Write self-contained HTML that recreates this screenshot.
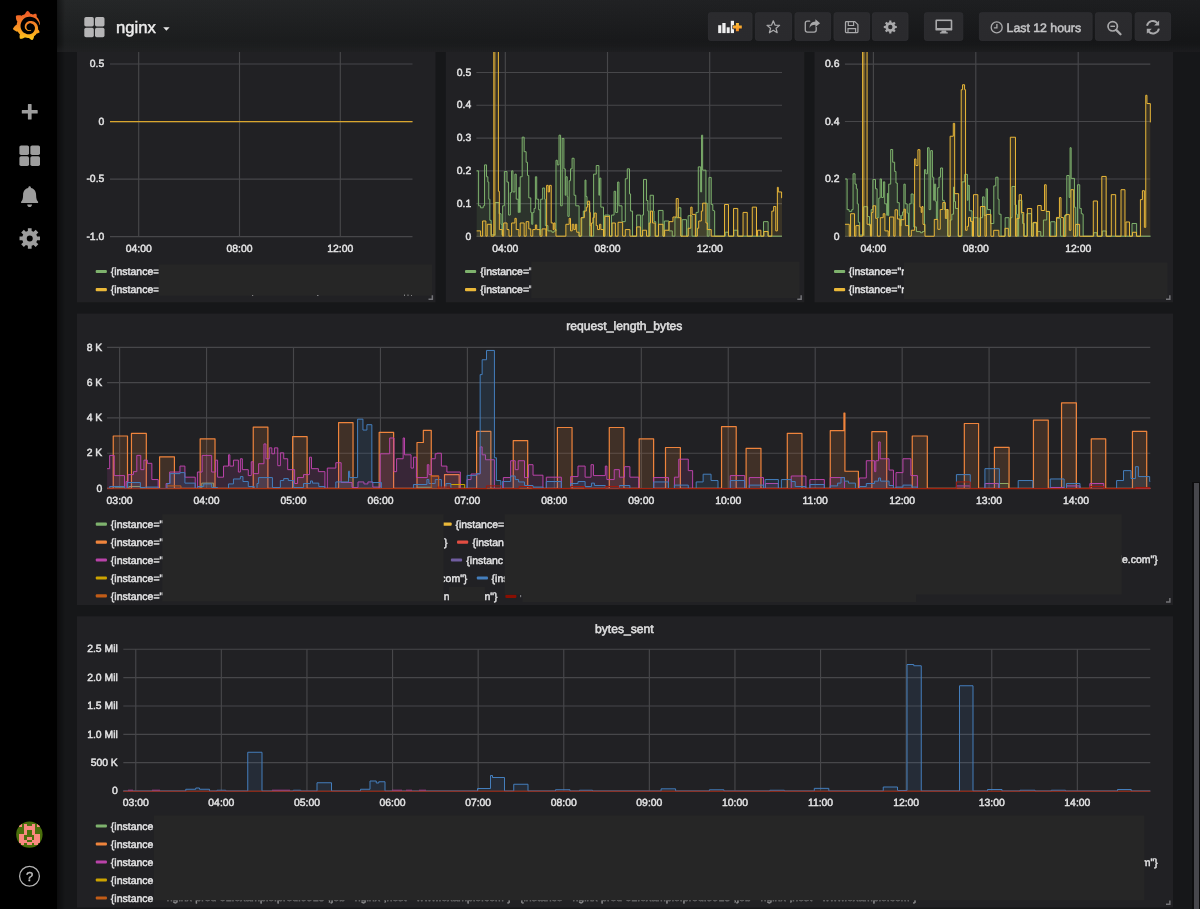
<!DOCTYPE html>
<html>
<head>
<meta charset="utf-8">
<title>nginx - Grafana</title>
<style>
*{box-sizing:border-box;margin:0;padding:0}
html,body{width:1200px;height:909px;overflow:hidden;background:#161719;font-family:"Liberation Sans",sans-serif;color:#d8d9da}
#side{will-change:transform;position:absolute;left:0;top:0;width:57px;height:909px;background:#000;z-index:5}
#sideshadow{position:absolute;left:57px;top:0;width:8px;height:909px;background:linear-gradient(90deg,rgba(0,0,0,.45),rgba(0,0,0,0));z-index:4}
#nav{will-change:transform;position:absolute;left:57px;top:0;width:1143px;height:52px;background:linear-gradient(180deg,rgba(255,255,255,.02) 0%,rgba(0,0,0,.14) 80%,rgba(0,0,0,.04) 100%),linear-gradient(90deg,#212324 0%,#1c1d1f 50%,#18191b 100%);z-index:3}
#navshadow{position:absolute;left:57px;top:45px;width:1143px;height:7px;background:linear-gradient(180deg,rgba(32,33,35,0),rgba(32,33,35,.55));z-index:4}
.panel{position:absolute;overflow:hidden;will-change:transform}
.panel svg{position:absolute;left:0;top:0}
.btn{position:absolute;top:13px;height:28px;background:linear-gradient(180deg,#2a2a2d,#2c2c2f);border:1px solid #313134;border-radius:2px}
.btn svg{position:absolute}
.ax{font-size:10.4px;fill:#e4e4e5;stroke:#e4e4e5;stroke-width:.45px;font-family:"Liberation Sans",sans-serif}
.lg{font-size:10.5px;fill:#e4e4e5;stroke:#e4e4e5;stroke-width:.45px;font-family:"Liberation Sans",sans-serif}
.ttl{font-size:12.15px;fill:#e0e0e1;stroke:#e0e0e1;stroke-width:.5px;font-family:"Liberation Sans",sans-serif}
.grid line{stroke:#47474a;stroke-width:1.15}
svg text{text-rendering:geometricPrecision}
.red{fill:#262626}
</style>
</head>
<body>
<div id="side"><svg width="57" height="909" viewBox="0 0 57 909" style="position:absolute;left:0;top:0"><defs><linearGradient id="lg" x1="0" y1="1" x2="0" y2="0"><stop offset="0" stop-color="#fdc81c"/><stop offset="0.22" stop-color="#fbab1e"/><stop offset="0.55" stop-color="#f58426"/><stop offset="1" stop-color="#ee5528"/></linearGradient></defs><g transform="translate(12.3 10.6) scale(0.08076)"><path fill="url(#lg)" d="M342,161.2c-0.6-6.1-1.6-13.1-3.6-20.9c-2-7.7-5-16.2-9.4-25c-4.4-8.8-10.1-17.9-17.5-26.8c-2.9-3.5-6.1-6.9-9.5-10.2c5.1-20.3-6.2-37.9-6.2-37.9c-19.5-1.2-31.9,6.1-36.5,9.4c-0.8-0.3-1.5-0.7-2.3-1c-3.3-1.3-6.7-2.6-10.3-3.7c-3.5-1.1-7.1-2.1-10.8-3c-3.7-0.9-7.4-1.6-11.2-2.2c-0.7-0.1-1.3-0.2-2-0.3c-8.5-27.2-32.9-38.6-32.9-38.6c-27.3,17.3-32.4,41.5-32.4,41.5s-0.1,0.5-0.3,1.4c-1.5,0.4-3,0.9-4.5,1.3c-2.1,0.6-4.2,1.4-6.2,2.2c-2.1,0.8-4.1,1.6-6.2,2.5c-4.1,1.8-8.2,3.8-12.2,6c-3.9,2.2-7.7,4.6-11.4,7.1c-0.5-0.2-1-0.4-1-0.4c-37.8-14.4-71.3,2.9-71.3,2.9c-3.1,40.2,15.1,65.5,18.7,70.1c-0.9,2.5-1.7,5-2.5,7.5c-2.8,9.1-4.9,18.4-6.2,28.1c-0.2,1.4-0.4,2.8-0.5,4.2c-35,17.3-45.3,52.6-45.3,52.6c29.1,33.5,63.1,35.6,63.1,35.6c0,0,0.1-0.1,0.1-0.1c4.3,7.7,9.3,15,14.9,21.9c2.4,2.9,4.8,5.6,7.4,8.3c-10.6,30.4,1.5,55.6,1.5,55.6c32.4,1.2,53.7-14.2,58.2-17.7c3.2,1.1,6.5,2.1,9.8,2.9c10,2.6,20.2,4.1,30.4,4.5c2.5,0.1,5.1,0.2,7.6,0.1l1.2,0l0.8,0l1.6,0l1.6-0.1l0,0.1c15.3,21.8,42.1,24.9,42.1,24.9c19.1-20.1,20.2-40.1,20.2-44.4l0,0c0,0,0-0.1,0-0.3c0-0.4,0-0.6,0-0.6l0,0c0-0.3,0-0.6,0-0.9c4-2.8,7.8-5.8,11.4-9.1c7.6-6.9,14.3-14.8,19.9-23.3c0.5-0.8,1-1.6,1.5-2.4c21.6,1.2,36.9-13.4,36.9-13.4c-3.6-22.5-16.4-33.5-19.1-35.6l0,0c0,0-0.1-0.1-0.3-0.2c-0.2-0.1-0.2-0.2-0.2-0.2c0,0,0,0,0,0c-0.1-0.1-0.3-0.2-0.5-0.3c0.1-1.4,0.2-2.7,0.3-4.1c0.2-2.4,0.2-4.9,0.2-7.3l0-1.8l0-0.9l0-0.5c0-0.6,0-0.4,0-0.6l-0.1-1.5l-0.1-2c0-0.7-0.1-1.3-0.2-1.9c-0.1-0.6-0.1-1.3-0.2-1.9l-0.2-1.9l-0.3-1.9c-0.4-2.5-0.8-4.9-1.4-7.4c-2.3-9.7-6.1-18.9-11-27.2c-5-8.3-11.2-15.6-18.3-21.8c-7-6.2-14.9-11.2-23.1-14.9c-8.3-3.7-16.9-6.1-25.5-7.2c-4.3-0.6-8.6-0.8-12.9-0.7l-1.6,0l-0.4,0c-0.1,0-0.6,0-0.5,0l-0.7,0l-1.6,0.1c-0.6,0-1.2,0.1-1.7,0.1c-2.2,0.2-4.4,0.5-6.5,0.9c-8.6,1.6-16.7,4.7-23.8,9c-7.1,4.3-13.3,9.6-18.3,15.6c-5,6-8.9,12.7-11.6,19.6c-2.7,6.9-4.2,14.1-4.6,21c-0.1,1.7-0.1,3.5-0.1,5.2c0,0.4,0,0.9,0,1.3l0.1,1.4c0.1,0.8,0.1,1.7,0.2,2.5c0.3,3.5,1,6.9,1.9,10.1c1.9,6.5,4.9,12.4,8.6,17.4c3.7,5,8.2,9.1,12.9,12.4c4.7,3.2,9.8,5.5,14.8,7c5,1.5,10,2.1,14.7,2.1c0.6,0,1.2,0,1.7,0c0.3,0,0.6,0,0.9,0c0.3,0,0.6,0,0.9-0.1c0.5,0,1-0.1,1.5-0.1c0.1,0,0.3,0,0.4-0.1l0.5-0.1c0.3,0,0.6-0.1,0.9-0.1c0.6-0.1,1.1-0.2,1.7-0.3c0.6-0.1,1.1-0.2,1.6-0.4c1.1-0.2,2.1-0.6,3.1-0.9c2-0.7,4-1.5,5.7-2.4c1.8-0.9,3.4-2,5-3c0.4-0.3,0.9-0.6,1.3-1c1.6-1.3,1.9-3.7,0.6-5.3c-1.1-1.4-3.1-1.8-4.7-0.9c-0.4,0.2-0.8,0.4-1.2,0.6c-1.4,0.7-2.8,1.3-4.3,1.8c-1.5,0.5-3.1,0.9-4.7,1.2c-0.8,0.1-1.6,0.2-2.5,0.3c-0.4,0-0.8,0.1-1.3,0.1c-0.4,0-0.9,0-1.2,0c-0.4,0-0.8,0-1.2,0c-0.5,0-1,0-1.5-0.1c0,0-0.3,0-0.1,0l-0.2,0l-0.3,0c-0.2,0-0.5,0-0.7-0.1c-0.5-0.1-0.9-0.1-1.4-0.2c-3.7-0.5-7.4-1.6-10.9-3.2c-3.6-1.6-7-3.8-10.1-6.6c-3.1-2.8-5.8-6.1-7.9-9.9c-2.1-3.8-3.6-8-4.3-12.4c-0.3-2.2-0.5-4.5-0.4-6.7c0-0.6,0.1-1.2,0.1-1.8c0,0.2,0-0.1,0-0.1l0-0.2l0-0.5c0-0.3,0.1-0.6,0.1-0.9c0.1-1.2,0.3-2.4,0.5-3.6c1.7-9.6,6.5-19,13.9-26.1c1.9-1.8,3.9-3.4,6-4.9c2.1-1.5,4.4-2.8,6.8-3.9c2.4-1.1,4.8-2,7.4-2.7c2.5-0.7,5.1-1.1,7.8-1.4c1.3-0.1,2.6-0.2,4-0.2c0.4,0,0.6,0,0.9,0l1.1,0l0.7,0c0.3,0,0,0,0.1,0l0.3,0l1.1,0.1c2.9,0.2,5.7,0.6,8.5,1.3c5.6,1.2,11.1,3.3,16.2,6.1c10.2,5.7,18.9,14.5,24.2,25.1c2.7,5.3,4.6,11,5.5,16.9c0.2,1.5,0.4,3,0.5,4.5l0.1,1.1l0.1,1.1c0,0.4,0,0.8,0,1.1c0,0.4,0,0.8,0,1.1l0,1l0,1.1c0,0.7-0.1,1.9-0.1,2.6c-0.1,1.6-0.3,3.3-0.5,4.9c-0.2,1.6-0.5,3.2-0.8,4.8c-0.3,1.6-0.7,3.2-1.1,4.7c-0.8,3.1-1.8,6.2-3,9.3c-2.4,6-5.6,11.8-9.4,17.1c-7.7,10.6-18.2,19.2-30.2,24.7c-6,2.7-12.3,4.7-18.8,5.7c-3.2,0.6-6.5,0.9-9.8,1l-0.6,0l-0.5,0l-1.1,0l-1.6,0l-0.8,0c0.4,0-0.1,0-0.1,0l-0.3,0c-1.8,0-3.5-0.1-5.3-0.3c-7-0.5-13.9-1.8-20.7-3.7c-6.7-1.9-13.2-4.6-19.4-7.8c-12.3-6.6-23.4-15.6-32-26.5c-4.3-5.4-8.1-11.3-11.2-17.4c-3.1-6.1-5.6-12.6-7.4-19.1c-1.8-6.6-2.9-13.3-3.4-20.1l-0.1-1.3l0-0.3l0-0.3l0-0.6l0-1.1l0-0.3l0-0.4l0-0.8l0-1.6l0-0.3c0,0,0,0.1,0-0.1l0-0.6c0-0.8,0-1.7,0-2.5c0.1-3.3,0.4-6.8,0.8-10.2c0.4-3.4,1-6.9,1.7-10.3c0.7-3.4,1.5-6.8,2.5-10.2c1.9-6.7,4.3-13.2,7.1-19.3c5.7-12.2,13.1-23.1,22-31.8c2.2-2.2,4.5-4.2,6.9-6.2c2.4-1.9,4.9-3.7,7.5-5.4c2.5-1.7,5.2-3.2,7.9-4.6c1.3-0.7,2.7-1.4,4.1-2c0.7-0.3,1.4-0.6,2.1-0.9c0.7-0.3,1.4-0.6,2.1-0.9c2.8-1.2,5.7-2.2,8.7-3.1c0.7-0.2,1.5-0.4,2.2-0.7c0.7-0.2,1.5-0.4,2.2-0.6c1.5-0.4,3-0.8,4.5-1.1c0.7-0.2,1.5-0.3,2.3-0.5c0.8-0.2,1.5-0.3,2.3-0.5c0.8-0.1,1.5-0.3,2.3-0.4l1.1-0.2l1.2-0.2c0.8-0.1,1.5-0.2,2.3-0.3c0.9-0.1,1.7-0.2,2.6-0.3c0.7-0.1,1.9-0.2,2.6-0.3c0.5-0.1,1.1-0.1,1.6-0.2l1.1-0.1l0.5-0.1l0.6,0c0.9-0.1,1.7-0.1,2.6-0.2l1.3-0.1c0,0,0.5,0,0.1,0l0.3,0l0.6,0c0.7,0,1.5-0.1,2.2-0.1c2.9-0.1,5.9-0.1,8.8,0c5.8,0.2,11.5,0.9,17,1.9c11.1,2.1,21.5,5.6,31,10.3c9.5,4.6,17.9,10.3,25.3,16.5c0.5,0.4,0.9,0.8,1.4,1.2c0.4,0.4,0.9,0.8,1.3,1.2c0.9,0.8,1.7,1.6,2.6,2.4c0.9,0.8,1.7,1.6,2.5,2.4c0.8,0.8,1.6,1.6,2.4,2.5c3.1,3.3,6,6.6,8.6,10c5.2,6.7,9.4,13.5,12.7,19.9c0.2,0.4,0.4,0.8,0.6,1.2c0.2,0.4,0.4,0.8,0.6,1.2c0.4,0.8,0.8,1.6,1.1,2.4c0.4,0.8,0.7,1.5,1.1,2.3c0.3,0.8,0.7,1.5,1,2.3c1.2,3,2.4,5.9,3.3,8.6c1.5,4.4,2.6,8.3,3.5,11.7c0.3,1.4,1.6,2.3,3,2.1c1.5-0.1,2.6-1.3,2.6-2.8C342.6,170.4,342.5,166.1,342,161.2z"/></g><path fill="#9d9d9d" d="M28.4 103.9h2.7a.5.5 0 0 1 .5.5v5.6h5.600a.5.5 0 0 1 .5.5v2.500a.5.5 0 0 1-.5.5h-5.600v5.600a.5.5 0 0 1-.5.5h-2.700a.5.5 0 0 1-.5-.5v-5.600h-5.600a.5.5 0 0 1-.5-.5v-2.500a.5.5 0 0 1 .5-.5h5.600v-5.600a.5.5 0 0 1 .5-.5z"/><rect x="19.4" y="145.4" width="9.65" height="9.65" rx="1.7" fill="#9d9d9d"/><rect x="19.4" y="156.35" width="9.65" height="9.65" rx="1.7" fill="#9d9d9d"/><rect x="30.35" y="145.4" width="9.65" height="9.65" rx="1.7" fill="#9d9d9d"/><rect x="30.35" y="156.35" width="9.65" height="9.65" rx="1.7" fill="#9d9d9d"/><path fill="#9d9d9d" d="M29.6 186.2c.8 0 1.3.6 1.3 1.3v.6c3.2.7 5.2 3.3 5.2 6.9 0 3.900 .9 5.7 2 6.700v1.4h-17v-1.4c1.100-1 2-2.800 2-6.700 0-3.600 2-6.200 5.200-6.900v-.6c0-.7.5-1.300 1.300-1.300z"/><path fill="#9d9d9d" d="M27.2 204.4h4.800c0 1.500-1 2.600-2.400 2.600s-2.400-1.100-2.400-2.600z"/><path fill="#9d9d9d" fill-rule="evenodd" d="M37.11 236.51 L39.98 236.53 L39.98 240.27 L37.11 240.29 L36.29 242.27 L38.31 244.31 L35.66 246.96 L33.62 244.94 L31.64 245.76 L31.62 248.63 L27.88 248.63 L27.86 245.76 L25.88 244.94 L23.84 246.96 L21.19 244.31 L23.21 242.27 L22.39 240.29 L19.52 240.27 L19.52 236.53 L22.39 236.51 L23.21 234.53 L21.19 232.49 L23.84 229.84 L25.88 231.86 L27.86 231.04 L27.88 228.17 L31.62 228.17 L31.64 231.04 L33.62 231.86 L35.66 229.84 L38.31 232.49 L36.29 234.53ZM26.75 238.4 a3 3 0 1 0 6 0 a3 3 0 1 0 -6 0Z"/><defs><clipPath id="av"><circle cx="29.4" cy="834.6" r="13.2"/></clipPath></defs><g clip-path="url(#av)" shape-rendering="crispEdges"><rect x="16.2" y="821.4" width="26.4" height="26.4" fill="#4a6f0c"/><rect x="18.64" y="823.84" width="3.04" height="3.04" fill="#f98a80"/><rect x="23.92" y="823.84" width="3.04" height="3.04" fill="#f98a80"/><rect x="31.84" y="823.84" width="3.04" height="3.04" fill="#f98a80"/><rect x="37.12" y="823.84" width="3.04" height="3.04" fill="#f98a80"/><rect x="23.92" y="826.48" width="3.04" height="3.04" fill="#f98a80"/><rect x="26.56" y="826.48" width="3.04" height="3.04" fill="#f98a80"/><rect x="29.2" y="826.48" width="3.04" height="3.04" fill="#f98a80"/><rect x="31.84" y="826.48" width="3.04" height="3.04" fill="#f98a80"/><rect x="23.92" y="829.12" width="3.04" height="3.04" fill="#f98a80"/><rect x="31.84" y="829.12" width="3.04" height="3.04" fill="#f98a80"/><rect x="23.92" y="831.76" width="3.04" height="3.04" fill="#f98a80"/><rect x="31.84" y="831.76" width="3.04" height="3.04" fill="#f98a80"/><rect x="18.64" y="834.4" width="3.04" height="3.04" fill="#f98a80"/><rect x="21.28" y="834.4" width="3.04" height="3.04" fill="#f98a80"/><rect x="34.48" y="834.4" width="3.04" height="3.04" fill="#f98a80"/><rect x="37.12" y="834.4" width="3.04" height="3.04" fill="#f98a80"/><rect x="18.64" y="837.04" width="3.04" height="3.04" fill="#f98a80"/><rect x="21.28" y="837.04" width="3.04" height="3.04" fill="#f98a80"/><rect x="26.56" y="837.04" width="3.04" height="3.04" fill="#f98a80"/><rect x="29.2" y="837.04" width="3.04" height="3.04" fill="#f98a80"/><rect x="34.48" y="837.04" width="3.04" height="3.04" fill="#f98a80"/><rect x="37.12" y="837.04" width="3.04" height="3.04" fill="#f98a80"/><rect x="18.64" y="839.68" width="3.04" height="3.04" fill="#f98a80"/><rect x="21.28" y="839.68" width="3.04" height="3.04" fill="#f98a80"/><rect x="23.92" y="839.68" width="3.04" height="3.04" fill="#f98a80"/><rect x="31.84" y="839.68" width="3.04" height="3.04" fill="#f98a80"/><rect x="34.48" y="839.68" width="3.04" height="3.04" fill="#f98a80"/><rect x="37.12" y="839.68" width="3.04" height="3.04" fill="#f98a80"/><rect x="21.28" y="842.32" width="3.04" height="3.04" fill="#f98a80"/><rect x="26.56" y="842.32" width="3.04" height="3.04" fill="#f98a80"/><rect x="29.2" y="842.32" width="3.04" height="3.04" fill="#f98a80"/><rect x="34.48" y="842.32" width="3.04" height="3.04" fill="#f98a80"/></g><circle cx="29.5" cy="876.2" r="9.9" fill="none" stroke="#b4b4b4" stroke-width="1.25"/><text x="29.6" y="880.9" text-anchor="middle" font-size="13" font-family="Liberation Sans, sans-serif" fill="#c0c0c0" stroke="#c0c0c0" stroke-width="0.4">?</text></svg></div>
<div id="sideshadow"></div>
<div id="nav"><svg width="1143" height="52" viewBox="57 0 1143 52" style="position:absolute;left:0;top:0"><defs><linearGradient id="bg" x1="0" y1="0" x2="0" y2="1"><stop offset="0" stop-color="#2b2b2e"/><stop offset="1" stop-color="#2a2a2d"/></linearGradient></defs><rect x="708.4" y="12.7" width="43.6" height="27.7" rx="2.2" fill="url(#bg)" stroke="#303033" stroke-width="0.8"/><rect x="755.4" y="12.7" width="36.2" height="27.7" rx="2.2" fill="url(#bg)" stroke="#303033" stroke-width="0.8"/><rect x="795" y="12.7" width="35.6" height="27.7" rx="2.2" fill="url(#bg)" stroke="#303033" stroke-width="0.8"/><rect x="834" y="12.7" width="35.6" height="27.7" rx="2.2" fill="url(#bg)" stroke="#303033" stroke-width="0.8"/><rect x="872.4" y="12.7" width="35.6" height="27.7" rx="2.2" fill="url(#bg)" stroke="#303033" stroke-width="0.8"/><rect x="924.4" y="12.7" width="38.4" height="27.7" rx="2.2" fill="url(#bg)" stroke="#303033" stroke-width="0.8"/><rect x="979.4" y="12.7" width="112.7" height="27.7" rx="2.2" fill="url(#bg)" stroke="#303033" stroke-width="0.8"/><rect x="1095.4" y="12.7" width="36" height="27.7" rx="2.2" fill="url(#bg)" stroke="#303033" stroke-width="0.8"/><rect x="1135.1" y="12.7" width="35.5" height="27.7" rx="2.2" fill="url(#bg)" stroke="#303033" stroke-width="0.8"/><rect x="84.3" y="17" width="9.5" height="9.5" rx="1.7" fill="#b5b5b6"/><rect x="84.3" y="27.7" width="9.5" height="9.5" rx="1.7" fill="#b5b5b6"/><rect x="95" y="17" width="9.5" height="9.5" rx="1.7" fill="#b5b5b6"/><rect x="95" y="27.7" width="9.5" height="9.5" rx="1.7" fill="#b5b5b6"/><text x="116" y="33" font-size="16.7" font-family="Liberation Sans, sans-serif" fill="#ececec" stroke="#ececec" stroke-width="0.45">nginx</text><path d="M163.2 27.2h6.400l-3.200 3.600z" fill="#e8e8e8"/><rect x="718.2" y="25.2" width="3.1" height="7.9" fill="#efefef"/><rect x="722.3" y="23" width="3.3" height="10.1" fill="#efefef"/><rect x="726.7" y="27.3" width="3" height="5.8" fill="#efefef"/><rect x="730.8" y="20.8" width="3.2" height="12.3" fill="#efefef"/><defs><linearGradient id="pg" x1="0" y1="0" x2="0" y2="1"><stop offset="0" stop-color="#fdc23a"/><stop offset="1" stop-color="#f58a1f"/></linearGradient></defs><path d="M735.900 23h3v2.600h2.900v3h-2.900v2.600h-3v-2.600h-2.900v-3h2.900z" fill="url(#pg)" stroke="#29292c" stroke-width="1.300" paint-order="stroke" stroke-linejoin="round"/><path d="M773.3 20.8 L775 25.05 L779.58 25.36 L776.06 28.3 L777.18 32.74 L773.3 30.3 L769.42 32.74 L770.54 28.3 L767.02 25.36 L771.6 25.05Z" fill="none" stroke="#a9a9ab" stroke-width="1.25" stroke-linejoin="round"/><path d="M816.200 27.500v2.500a2.100 2.100 0 0 1-2.100 2.100h-6.700a2.100 2.100 0 0 1-2.100-2.100v-6.700a2.100 2.100 0 0 1 2.100-2.100h2.300" fill="none" stroke="#a9a9ab" stroke-width="1.3" stroke-linecap="round"/><path d="M815.400 19.300l4.700 3.900-4.700 3.900v-2.400c-3.200 0-4.800 1-5.800 3.300 0-4 2.200-6.200 5.800-6.400z" fill="#a9a9ab"/><path d="M846.300 21.600h8.600l3 3v7.200a.8.800 0 0 1-.8.800h-10.800a.8.800 0 0 1-.8-.8v-9.400a.8.800 0 0 1 .8-.8z" fill="none" stroke="#a9a9ab" stroke-width="1.25" stroke-linejoin="round"/><path d="M848.300 21.800v3.700h5.300v-3.700M848 32.400v-3.800h7.600v3.800" fill="none" stroke="#a9a9ab" stroke-width="1.15"/><path fill="#a9a9ab" fill-rule="evenodd" d="M895.06 25.86 L896.81 25.92 L896.81 28.08 L895.06 28.14 L894.48 29.56 L895.67 30.84 L894.14 32.37 L892.86 31.18 L891.44 31.76 L891.38 33.51 L889.22 33.51 L889.16 31.76 L887.74 31.18 L886.46 32.37 L884.93 30.84 L886.12 29.56 L885.54 28.14 L883.79 28.08 L883.79 25.92 L885.54 25.86 L886.12 24.44 L884.93 23.16 L886.46 21.63 L887.74 22.82 L889.16 22.24 L889.22 20.49 L891.38 20.49 L891.44 22.24 L892.86 22.82 L894.14 21.63 L895.67 23.16 L894.48 24.44ZM888.1 27 a2.2 2.2 0 1 0 4.4 0 a2.2 2.2 0 1 0 -4.4 0Z"/><rect x="935.400" y="19.600" width="16.900" height="11" rx="1.200" fill="#a9a9ab"/><rect x="937" y="21.100" width="13.700" height="6.900" fill="#29292c"/><path d="M941.700 30.600h4.300l.5 1.700h1.300v1.200h-7.900v-1.200h1.300z" fill="#a9a9ab"/><circle cx="996.700" cy="27.400" r="5.500" fill="none" stroke="#a9a9ab" stroke-width="1.300"/><path d="M996.900 23.900v3.900h-3" fill="none" stroke="#a9a9ab" stroke-width="1.300"/><text x="1006.600" y="32.200" font-size="12.300" font-family="Liberation Sans, sans-serif" fill="#c4c4c6" stroke="#c4c4c6" stroke-width="0.5">Last 12 hours</text><circle cx="1112.700" cy="26.300" r="4.700" fill="none" stroke="#a9a9ab" stroke-width="1.700"/><path d="M1116.200 29.900l4.300 4.300" stroke="#a9a9ab" stroke-width="2.300" stroke-linecap="round"/><path d="M1110.400 26.300h4.600" stroke="#a9a9ab" stroke-width="1.400"/><path d="M1147 25.800a6 6 0 0 1 10.300-2.900" fill="none" stroke="#a9a9ab" stroke-width="1.900"/><path d="M1159.100 20.600v5h-5z" fill="#a9a9ab"/><path d="M1158.900 28.600a6 6 0 0 1-10.300 2.900" fill="none" stroke="#a9a9ab" stroke-width="1.900"/><path d="M1146.800 33.800v-5h5z" fill="#a9a9ab"/></svg></div>
<div id="navshadow"></div>
<div class="panel" style="left:77px;top:10px;width:359px;height:293px"><svg width="359" height="293" viewBox="77 10 359 293"><rect x="77" y="10.8" width="358.5" height="291.5" fill="#212124"/><g class="grid"><line x1="110" x2="412.5" y1="64" y2="64"/><line x1="110" x2="412.5" y1="121.6" y2="121.6"/><line x1="110" x2="412.5" y1="179.1" y2="179.1"/><line x1="110" x2="412.5" y1="236.6" y2="236.6"/><line x1="138.7" x2="138.7" y1="52" y2="236.6"/><line x1="239.5" x2="239.5" y1="52" y2="236.6"/><line x1="340.3" x2="340.3" y1="52" y2="236.6"/></g><text class="ax" x="104.3" y="67.2" text-anchor="end">0.5</text><text class="ax" x="104.3" y="124.8" text-anchor="end">0</text><text class="ax" x="104.3" y="182.3" text-anchor="end">-0.5</text><text class="ax" x="104.3" y="239.8" text-anchor="end">-1.0</text><text class="ax" x="138.7" y="251.8" text-anchor="middle">04:00</text><text class="ax" x="239.5" y="251.8" text-anchor="middle">08:00</text><text class="ax" x="340.3" y="251.8" text-anchor="middle">12:00</text><line x1="110" x2="412.5" y1="121.6" y2="121.6" stroke="#d9a62e" stroke-width="1.2"/><rect x="95.7" y="269.9" width="11.2" height="3.2" rx="1" fill="#7EB26D"/><text class="lg" x="110.7" y="275.3">{instance=</text><rect x="95.7" y="288" width="11.2" height="3.2" rx="1" fill="#EAB839"/><text class="lg" x="110.7" y="293.4">{instance=</text><rect class="red" x="158.6" y="264.3" width="273.4" height="31.3"/><g fill="#9a9a9c"><rect x="252" y="295" width="1.2" height="0.8"/><rect x="317" y="295" width="1.5" height="0.8"/><rect x="404" y="294.6" width="1" height="1.2"/><rect x="407.5" y="294.6" width="1" height="1.2"/><rect x="411" y="295" width="1" height="0.8"/></g><path d="M433.1 299.9 h-4.6 v-1.5 h3.1 v-3.1 h1.5z" fill="#737377"/></svg></div>
<div class="panel" style="left:445px;top:10px;width:360px;height:293px"><svg width="360" height="293" viewBox="445 10 360 293"><rect x="445.8" y="10.8" width="358.5" height="291.5" fill="#212124"/><defs><clipPath id="c2"><rect x="476" y="52" width="307" height="185.2"/></clipPath><clipPath id="c3"><rect x="844.5" y="52" width="306.5" height="185.2"/></clipPath></defs><g class="grid"><line x1="476.4" x2="782" y1="236.4" y2="236.4"/><line x1="476.4" x2="782" y1="203.62" y2="203.62"/><line x1="476.4" x2="782" y1="170.84" y2="170.84"/><line x1="476.4" x2="782" y1="138.06" y2="138.06"/><line x1="476.4" x2="782" y1="105.28" y2="105.28"/><line x1="476.4" x2="782" y1="72.5" y2="72.5"/><line x1="505.3" x2="505.3" y1="52" y2="236.4"/><line x1="607.5" x2="607.5" y1="52" y2="236.4"/><line x1="709.7" x2="709.7" y1="52" y2="236.4"/></g><text class="ax" x="471.3" y="239.6" text-anchor="end">0</text><text class="ax" x="471.3" y="206.82" text-anchor="end">0.1</text><text class="ax" x="471.3" y="174.04" text-anchor="end">0.2</text><text class="ax" x="471.3" y="141.26" text-anchor="end">0.3</text><text class="ax" x="471.3" y="108.48" text-anchor="end">0.4</text><text class="ax" x="471.3" y="75.7" text-anchor="end">0.5</text><text class="ax" x="505.3" y="251.8" text-anchor="middle">04:00</text><text class="ax" x="607.5" y="251.8" text-anchor="middle">08:00</text><text class="ax" x="709.7" y="251.8" text-anchor="middle">12:00</text><path d="M476.64 170.83H478.62V205.81H480.6V207.79H483.24V205.81H484.56V164.88H486.54V176.77H487.86V182.05H488.79V199.21H489.84V220.33H491.16V234.85H495.12V202.51H499.08V213.73H501.06V224.29H501.99V234.85H502.65V205.81H504.36V171.49H507V182.05H508.59V215.05H510.3V192.61H511.62V170.83H512.94V191.95H514.92V174.13H516.24V199.21H518.22V212.41H518.88V187.33H519.54V212.41H520.2V176.77H522.18V137.16H524.17V151.68H526.15V162.24H527.47V175.45H528.79V197.89H530.77V212.41H531.69V224.29H532.75V212.41H534.07V208.45H535.39V176.77H536.71V199.21H538.69V209.77H540.01V234.85H540.67V199.21H542.65V187.99H544.63V199.21H545.29V225.61H547.93V230.89H551.89V232.21H554V230.89H555.98V160.26H557.3V164.88H559.02V135.18H560.6V205.81H562.18V138.48H563.9V168.84H565.22V195.25H565.88V176.77H567.2V196.57H567.86V216.37H569.18V180.73H570.5V168.84H572.09V158.28H574.07V195.25H575.78V205.81H579.08V236.17H581.72V217.69H583.31V211.09H585.02V180.07H585.95V196.57H587V204.49H589.64V236.17H593.6V174.13H596.24V165.54H598.88V195.25H599.54V178.09H600.86V207.13H603.5V236.17H604.83V215.05H609.45V236.17H611.43V215.05H614.07V191.29H615.65V212.41H617.63V182.05H618.95V205.81H621.99V221.65H625.29V178.75H627.27V168.84H629.51V193.93H630.57V211.09H632.55V236.17H634V236.17H636.64V215.05H640.6V236.17H642.18V215.05H643.5V179.41H646.54V200.53H647.86V211.09H648.79V236.17H650.11V195.25H653.41V211.09H654.07V221.65H655.78V236.17H658.42V210.43H663.04V236.17H664.36V220.99H668.98V230.89H672.28V236.17H674.92V217.69H678.22V207.79H680.86V236.17H682.18V219.67H686.54V236.17H688.13V215.71H692.09V236.17H696.05V212.41H698.29V166.86H700.67V191.95H701.59V135.18H702.65V170.17H705.95V203.17H707.27V236.17H708.98V177.43H711.23V204.49H712.81V210.43H714V211.09H714.66V236.17H725.22V232.21H728.52V236.17H733.8V230.23H737.76V236.17H763.5V221.65H768.13V236.17H781.99V236.17H782V236.4 H476.64 Z" fill="#7EB26D" fill-opacity="0.12" stroke="none" clip-path="url(#c2)"/><path d="M476.64 170.83H478.62V205.81H480.6V207.79H483.24V205.81H484.56V164.88H486.54V176.77H487.86V182.05H488.79V199.21H489.84V220.33H491.16V234.85H495.12V202.51H499.08V213.73H501.06V224.29H501.99V234.85H502.65V205.81H504.36V171.49H507V182.05H508.59V215.05H510.3V192.61H511.62V170.83H512.94V191.95H514.92V174.13H516.24V199.21H518.22V212.41H518.88V187.33H519.54V212.41H520.2V176.77H522.18V137.16H524.17V151.68H526.15V162.24H527.47V175.45H528.79V197.89H530.77V212.41H531.69V224.29H532.75V212.41H534.07V208.45H535.39V176.77H536.71V199.21H538.69V209.77H540.01V234.85H540.67V199.21H542.65V187.99H544.63V199.21H545.29V225.61H547.93V230.89H551.89V232.21H554V230.89H555.98V160.26H557.3V164.88H559.02V135.18H560.6V205.81H562.18V138.48H563.9V168.84H565.22V195.25H565.88V176.77H567.2V196.57H567.86V216.37H569.18V180.73H570.5V168.84H572.09V158.28H574.07V195.25H575.78V205.81H579.08V236.17H581.72V217.69H583.31V211.09H585.02V180.07H585.95V196.57H587V204.49H589.64V236.17H593.6V174.13H596.24V165.54H598.88V195.25H599.54V178.09H600.86V207.13H603.5V236.17H604.83V215.05H609.45V236.17H611.43V215.05H614.07V191.29H615.65V212.41H617.63V182.05H618.95V205.81H621.99V221.65H625.29V178.75H627.27V168.84H629.51V193.93H630.57V211.09H632.55V236.17H634V236.17H636.64V215.05H640.6V236.17H642.18V215.05H643.5V179.41H646.54V200.53H647.86V211.09H648.79V236.17H650.11V195.25H653.41V211.09H654.07V221.65H655.78V236.17H658.42V210.43H663.04V236.17H664.36V220.99H668.98V230.89H672.28V236.17H674.92V217.69H678.22V207.79H680.86V236.17H682.18V219.67H686.54V236.17H688.13V215.71H692.09V236.17H696.05V212.41H698.29V166.86H700.67V191.95H701.59V135.18H702.65V170.17H705.95V203.17H707.27V236.17H708.98V177.43H711.23V204.49H712.81V210.43H714V211.09H714.66V236.17H725.22V232.21H728.52V236.17H733.8V230.23H737.76V236.17H763.5V221.65H768.13V236.17H781.99V236.17H782" fill="none" stroke="#7EB26D" stroke-width="1" stroke-linejoin="round" clip-path="url(#c2)"/><path d="M476.64 230.89H480.6V236.17H482.58V220.99H485.88V236.17H487.2V224.29H491.16V236.17H493.8V-144.03H498.42V191.29H499.35V229.57H502.38V236.17H503.7V222.97H507V229.57H508.98V236.17H511.62V222.97H514.92V218.35H516.24V229.57H518.88V236.17H520.2V222.97H524.17V236.17H526.15V221.65H528.79V228.91H530.77V236.17H532.75V229.57H535.39V224.95H536.71V229.57H540.01V236.17H541.99V228.91H545.95V236.17H546.61V185.35H548.19V191.95H549.51V185.35H551.23V222.97H553.21V229.57H554V222.97H555.06V229.57H555.98V236.17H565.88V224.29H569.18V218.35H570.5V230.89H572.22V224.29H573.8V229.57H575.39V224.29H576.71V232.21H579.08V236.17H581.06V217.69H584.36V211.09H586.34V207.13H587.66V201.19H589.64V212.41H590.3V225.61H590.96V236.17H591.62V222.97H592.94V217.69H594.26V213.07H596.24V225.61H597.56V229.57H599.54V224.29H600.86V229.57H603.5V236.17H604.83V216.37H609.45V236.17H612.09V222.97H615.39V236.17H618.03V222.31H622.65V236.17H625.29V229.57H629.91V236.17H634V236.17H636.64V226.93H640.34V236.17H642.58V230.23H646.54V236.17H649.18V222.97H650.5V211.09H652.48V222.97H655.12V236.17H658.42V224.29H663.04V236.17H664.63V230.23H668.98V221.65H672.94V217.03H676.24V198.55H678.22V217.69H680.86V236.17H688.13V228.25H690.77V207.13H692.09V214.39H695.39V236.17H697.37V228.25H698.69V220.99H701.33V211.09H702.65V203.17H705.95V222.97H707.27V229.57H711.23V236.17H714V236.17H724.56V204.49H728.52V236.17H733.54V208.45H737.76V236.17H743.04V212.41H747.27V236.17H752.28V207.13H756.51V236.17H757.56V230.23H760.86V236.17H763.9V231.55H768.13V236.17H771.82V211.09H773.67V206.47H775.78V230.89H777.37V187.33H778.29V191.95H781.59V197.89H781.99V197.89H782V236.4 H476.64 Z" fill="#EAB839" fill-opacity="0.12" stroke="none" clip-path="url(#c2)"/><path d="M476.64 230.89H480.6V236.17H482.58V220.99H485.88V236.17H487.2V224.29H491.16V236.17H493.8V-144.03H498.42V191.29H499.35V229.57H502.38V236.17H503.7V222.97H507V229.57H508.98V236.17H511.62V222.97H514.92V218.35H516.24V229.57H518.88V236.17H520.2V222.97H524.17V236.17H526.15V221.65H528.79V228.91H530.77V236.17H532.75V229.57H535.39V224.95H536.71V229.57H540.01V236.17H541.99V228.91H545.95V236.17H546.61V185.35H548.19V191.95H549.51V185.35H551.23V222.97H553.21V229.57H554V222.97H555.06V229.57H555.98V236.17H565.88V224.29H569.18V218.35H570.5V230.89H572.22V224.29H573.8V229.57H575.39V224.29H576.71V232.21H579.08V236.17H581.06V217.69H584.36V211.09H586.34V207.13H587.66V201.19H589.64V212.41H590.3V225.61H590.96V236.17H591.62V222.97H592.94V217.69H594.26V213.07H596.24V225.61H597.56V229.57H599.54V224.29H600.86V229.57H603.5V236.17H604.83V216.37H609.45V236.17H612.09V222.97H615.39V236.17H618.03V222.31H622.65V236.17H625.29V229.57H629.91V236.17H634V236.17H636.64V226.93H640.34V236.17H642.58V230.23H646.54V236.17H649.18V222.97H650.5V211.09H652.48V222.97H655.12V236.17H658.42V224.29H663.04V236.17H664.63V230.23H668.98V221.65H672.94V217.03H676.24V198.55H678.22V217.69H680.86V236.17H688.13V228.25H690.77V207.13H692.09V214.39H695.39V236.17H697.37V228.25H698.69V220.99H701.33V211.09H702.65V203.17H705.95V222.97H707.27V229.57H711.23V236.17H714V236.17H724.56V204.49H728.52V236.17H733.54V208.45H737.76V236.17H743.04V212.41H747.27V236.17H752.28V207.13H756.51V236.17H757.56V230.23H760.86V236.17H763.9V231.55H768.13V236.17H771.82V211.09H773.67V206.47H775.78V230.89H777.37V187.33H778.29V191.95H781.59V197.89H781.99V197.89H782" fill="none" stroke="#EAB839" stroke-width="1.0" stroke-linejoin="round" clip-path="url(#c2)"/><path d="M494.9 52V236" stroke="#EAB839" stroke-width="0.9" fill="none" opacity="0.85"/><rect x="465" y="269.9" width="11.2" height="3.2" rx="1" fill="#7EB26D"/><text class="lg" x="480.3" y="275.3">{instance="</text><rect x="465" y="288" width="11.2" height="3.2" rx="1" fill="#EAB839"/><text class="lg" x="480.3" y="293.4">{instance="</text><rect class="red" x="531.2" y="261.7" width="268.3" height="36.3"/><path d="M801.9 299.9 h-4.6 v-1.5 h3.1 v-3.1 h1.5z" fill="#737377"/></svg></div>
<div class="panel" style="left:814px;top:10px;width:359px;height:293px"><svg width="359" height="293" viewBox="814 10 359 293"><rect x="814.5" y="10.8" width="358.5" height="291.5" fill="#212124"/><g class="grid"><line x1="844.9" x2="1150.3" y1="236.4" y2="236.4"/><line x1="844.9" x2="1150.3" y1="178.97" y2="178.97"/><line x1="844.9" x2="1150.3" y1="121.54" y2="121.54"/><line x1="844.9" x2="1150.3" y1="64.11" y2="64.11"/><line x1="873.4" x2="873.4" y1="52" y2="236.4"/><line x1="975.8" x2="975.8" y1="52" y2="236.4"/><line x1="1078.2" x2="1078.2" y1="52" y2="236.4"/></g><text class="ax" x="839.5" y="239.6" text-anchor="end">0</text><text class="ax" x="839.5" y="182.17" text-anchor="end">0.2</text><text class="ax" x="839.5" y="124.74" text-anchor="end">0.4</text><text class="ax" x="839.5" y="67.31" text-anchor="end">0.6</text><text class="ax" x="873.4" y="251.8" text-anchor="middle">04:00</text><text class="ax" x="975.8" y="251.8" text-anchor="middle">08:00</text><text class="ax" x="1078.2" y="251.8" text-anchor="middle">12:00</text><path d="M845.14 178.96H847.12V209.6H849.1V211.34H851.74V209.6H853.06V173.75H855.04V184.16H856.36V188.79H857.29V203.82H858.34V222.32H859.66V235.04H863.62V206.71H867.58V216.54H869.56V225.79H870.49V235.04H871.15V209.6H872.86V179.54H875.5V188.79H877.09V217.7H878.8V198.04H880.12V178.96H881.44V197.46H883.42V181.85H884.74V203.82H886.72V215.38H887.38V193.41H888.04V215.38H888.7V184.16H890.68V149.47H892.67V162.19H894.65V171.44H895.97V183H897.29V202.66H899.27V215.38H900.19V225.79H901.25V215.38H902.57V211.92H903.89V184.16H905.21V203.82H907.19V213.07H908.51V235.04H909.17V203.82H911.15V193.99H913.13V203.82H913.79V226.95H916.43V231.57H920.39V232.73H922.5V231.57H924.48V169.71H925.8V173.75H927.52V147.73H929.1V209.6H930.68V150.62H932.4V177.22H933.72V200.35H934.38V184.16H935.7V201.51H936.36V218.85H937.68V187.63H939V177.22H940.59V167.97H942.57V200.35H944.28V209.6H947.58V236.2H950.22V220.01H951.81V214.23H953.52V187.05H954.45V201.51H955.5V208.45H958.14V236.2H962.1V181.85H964.74V174.33H967.38V200.35H968.04V185.32H969.36V210.76H972V236.2H973.33V217.7H977.95V236.2H979.93V217.7H982.57V196.88H984.15V215.38H986.13V188.79H987.45V209.6H990.49V223.48H993.79V185.9H995.77V177.22H998.01V199.19H999.07V214.23H1001.05V236.2H1002.5V236.2H1005.14V217.7H1009.1V236.2H1010.68V217.7H1012V186.47H1015.04V204.98H1016.36V214.23H1017.29V236.2H1018.61V200.35H1021.91V214.23H1022.57V223.48H1024.28V236.2H1026.92V213.65H1031.54V236.2H1032.86V222.9H1037.48V231.57H1040.78V236.2H1043.42V220.01H1046.72V211.34H1049.36V236.2H1050.68V221.74H1055.04V236.2H1056.63V218.28H1060.59V236.2H1064.55V215.38H1066.79V175.49H1069.17V197.46H1070.09V147.73H1071.15V178.38H1074.45V207.29H1075.77V236.2H1077.48V184.74H1079.73V208.45H1081.31V213.65H1082.5V214.23H1083.16V236.2H1093.72V232.73H1097.02V236.2H1102.3V231H1106.26V236.2H1132V223.48H1136.63V236.2H1150.49V236.2H1150.3V236.4 H845.14 Z" fill="#7EB26D" fill-opacity="0.12" stroke="none" clip-path="url(#c3)"/><path d="M845.14 178.96H847.12V209.6H849.1V211.34H851.74V209.6H853.06V173.75H855.04V184.16H856.36V188.79H857.29V203.82H858.34V222.32H859.66V235.04H863.62V206.71H867.58V216.54H869.56V225.79H870.49V235.04H871.15V209.6H872.86V179.54H875.5V188.79H877.09V217.7H878.8V198.04H880.12V178.96H881.44V197.46H883.42V181.85H884.74V203.82H886.72V215.38H887.38V193.41H888.04V215.38H888.7V184.16H890.68V149.47H892.67V162.19H894.65V171.44H895.97V183H897.29V202.66H899.27V215.38H900.19V225.79H901.25V215.38H902.57V211.92H903.89V184.16H905.21V203.82H907.19V213.07H908.51V235.04H909.17V203.82H911.15V193.99H913.13V203.82H913.79V226.95H916.43V231.57H920.39V232.73H922.5V231.57H924.48V169.71H925.8V173.75H927.52V147.73H929.1V209.6H930.68V150.62H932.4V177.22H933.72V200.35H934.38V184.16H935.7V201.51H936.36V218.85H937.68V187.63H939V177.22H940.59V167.97H942.57V200.35H944.28V209.6H947.58V236.2H950.22V220.01H951.81V214.23H953.52V187.05H954.45V201.51H955.5V208.45H958.14V236.2H962.1V181.85H964.74V174.33H967.38V200.35H968.04V185.32H969.36V210.76H972V236.2H973.33V217.7H977.95V236.2H979.93V217.7H982.57V196.88H984.15V215.38H986.13V188.79H987.45V209.6H990.49V223.48H993.79V185.9H995.77V177.22H998.01V199.19H999.07V214.23H1001.05V236.2H1002.5V236.2H1005.14V217.7H1009.1V236.2H1010.68V217.7H1012V186.47H1015.04V204.98H1016.36V214.23H1017.29V236.2H1018.61V200.35H1021.91V214.23H1022.57V223.48H1024.28V236.2H1026.92V213.65H1031.54V236.2H1032.86V222.9H1037.48V231.57H1040.78V236.2H1043.42V220.01H1046.72V211.34H1049.36V236.2H1050.68V221.74H1055.04V236.2H1056.63V218.28H1060.59V236.2H1064.55V215.38H1066.79V175.49H1069.17V197.46H1070.09V147.73H1071.15V178.38H1074.45V207.29H1075.77V236.2H1077.48V184.74H1079.73V208.45H1081.31V213.65H1082.5V214.23H1083.16V236.2H1093.72V232.73H1097.02V236.2H1102.3V231H1106.26V236.2H1132V223.48H1136.63V236.2H1150.49V236.2H1150.3" fill="none" stroke="#7EB26D" stroke-width="1" stroke-linejoin="round" clip-path="url(#c3)"/><path d="M844.9 224.29H849.26V236.17H850.58V213.73H854.54V236.17H855.86V225.61H859.16V236.17H862.59V-276.04H867.08V224.29H870.38V236.17H871.7V212.41H873.02V205.81H875.66V218.35H877.38V236.17H880.28V217.69H883.19V213.73H884.9V230.89H888.2V236.17H889.52V217.03H893.75V236.17H895.07V209.77H897.45V219.01H899.82V236.17H900.75V219.67H904.05V209.11H905.37V225.61H908.67V236.17H911.31V230.23H914.61V158.94H915.93V165.54H917.91V149.7H919.89V207.13H921.21V212.41H922V206.53H922.99V224.36H924.97V236.24H934.28V219.41H937.84V229.31H940.22V209.5H942.79V202.57H945.37V218.42H946.75V209.5H948.14V236.24H950.12V136.24H953.29V123.37H954.67V193.66H958.63V236.24H961.21V89.7H962.59V84.75H964.57V89.7H965.56V230.3H967.15V226.34H968.53V217.43H970.51V221.39H972.5V236.24H973.49V194.65H977.84V236.24H980.42V206.53H984.97V236.24H986.36V214.46H990.91V236.24H993.68V230.3H998.83V236.24H1002V236.24H1004.97V228.32H1008.34V236.24H1010.32V137.23H1015.47V236.24H1016.85V218.42H1019.23V194.65H1021.41V212.48H1023.78V236.24H1027.35V208.51H1031.7V236.24H1033.29V222.38H1036.65V236.24H1037.64V205.54H1041.21V210.5H1044.57V184.75H1046.16V211.49H1049.52V236.24H1056.46V217.43H1059.43V197.62H1061.01V217.43H1063.39V236.24H1065.76V214.46H1069.33V230.3H1070.91V189.7H1073.68V236.24H1075.66V224.36H1079.62V236.24H1082V236.24H1093.29V200.99H1097.45V236.24H1101.8V176.44H1106.16V236.24H1111.31V194.65H1115.66V236.24H1121.01V189.7H1124.97V236.24H1125.96V221.98H1129.52V236.24H1132.5V232.28H1136.46V236.24H1140.42V199.6H1142.4V190.69H1144.38V227.33H1145.76V95.25H1146.95V103.56H1150.32V122.38H1150.3V236.4 H844.9 Z" fill="#EAB839" fill-opacity="0.12" stroke="none" clip-path="url(#c3)"/><path d="M844.9 224.29H849.26V236.17H850.58V213.73H854.54V236.17H855.86V225.61H859.16V236.17H862.59V-276.04H867.08V224.29H870.38V236.17H871.7V212.41H873.02V205.81H875.66V218.35H877.38V236.17H880.28V217.69H883.19V213.73H884.9V230.89H888.2V236.17H889.52V217.03H893.75V236.17H895.07V209.77H897.45V219.01H899.82V236.17H900.75V219.67H904.05V209.11H905.37V225.61H908.67V236.17H911.31V230.23H914.61V158.94H915.93V165.54H917.91V149.7H919.89V207.13H921.21V212.41H922V206.53H922.99V224.36H924.97V236.24H934.28V219.41H937.84V229.31H940.22V209.5H942.79V202.57H945.37V218.42H946.75V209.5H948.14V236.24H950.12V136.24H953.29V123.37H954.67V193.66H958.63V236.24H961.21V89.7H962.59V84.75H964.57V89.7H965.56V230.3H967.15V226.34H968.53V217.43H970.51V221.39H972.5V236.24H973.49V194.65H977.84V236.24H980.42V206.53H984.97V236.24H986.36V214.46H990.91V236.24H993.68V230.3H998.83V236.24H1002V236.24H1004.97V228.32H1008.34V236.24H1010.32V137.23H1015.47V236.24H1016.85V218.42H1019.23V194.65H1021.41V212.48H1023.78V236.24H1027.35V208.51H1031.7V236.24H1033.29V222.38H1036.65V236.24H1037.64V205.54H1041.21V210.5H1044.57V184.75H1046.16V211.49H1049.52V236.24H1056.46V217.43H1059.43V197.62H1061.01V217.43H1063.39V236.24H1065.76V214.46H1069.33V230.3H1070.91V189.7H1073.68V236.24H1075.66V224.36H1079.62V236.24H1082V236.24H1093.29V200.99H1097.45V236.24H1101.8V176.44H1106.16V236.24H1111.31V194.65H1115.66V236.24H1121.01V189.7H1124.97V236.24H1125.96V221.98H1129.52V236.24H1132.5V232.28H1136.46V236.24H1140.42V199.6H1142.4V190.69H1144.38V227.33H1145.76V95.25H1146.95V103.56H1150.32V122.38H1150.3" fill="none" stroke="#EAB839" stroke-width="1.0" stroke-linejoin="round" clip-path="url(#c3)"/><path d="M863.9 52V236" stroke="#EAB839" stroke-width="0.9" fill="none" opacity="0.85"/><rect x="834" y="269.9" width="11.2" height="3.2" rx="1" fill="#7EB26D"/><text class="lg" x="848.7" y="275.3">{instance="n</text><rect x="834" y="288" width="11.2" height="3.2" rx="1" fill="#EAB839"/><text class="lg" x="848.7" y="293.4">{instance="n</text><rect class="red" x="904" y="262.5" width="263.5" height="36.5"/><path d="M1170.6 299.9 h-4.6 v-1.5 h3.1 v-3.1 h1.5z" fill="#737377"/></svg></div>
<div class="panel" style="left:77px;top:313px;width:1096px;height:293px"><svg width="1096" height="293" viewBox="77 313 1096 293"><rect x="77" y="313.6" width="1096" height="291.5" fill="#212124"/><defs><clipPath id="c4"><rect x="106.8" y="340" width="1044" height="149.6"/></clipPath></defs><g class="grid"><line x1="107.1" x2="1150.3" y1="488.5" y2="488.5"/><line x1="107.1" x2="1150.3" y1="453.2" y2="453.2"/><line x1="107.1" x2="1150.3" y1="417.9" y2="417.9"/><line x1="107.1" x2="1150.3" y1="382.6" y2="382.6"/><line x1="107.1" x2="1150.3" y1="347.3" y2="347.3"/><line x1="119.6" x2="119.6" y1="347.3" y2="488.5"/><line x1="206.55" x2="206.55" y1="347.3" y2="488.5"/><line x1="293.5" x2="293.5" y1="347.3" y2="488.5"/><line x1="380.45" x2="380.45" y1="347.3" y2="488.5"/><line x1="467.4" x2="467.4" y1="347.3" y2="488.5"/><line x1="554.35" x2="554.35" y1="347.3" y2="488.5"/><line x1="641.3" x2="641.3" y1="347.3" y2="488.5"/><line x1="728.25" x2="728.25" y1="347.3" y2="488.5"/><line x1="815.2" x2="815.2" y1="347.3" y2="488.5"/><line x1="902.15" x2="902.15" y1="347.3" y2="488.5"/><line x1="989.1" x2="989.1" y1="347.3" y2="488.5"/><line x1="1076.05" x2="1076.05" y1="347.3" y2="488.5"/></g><text class="ax" x="102.3" y="491.7" text-anchor="end">0</text><text class="ax" x="102.3" y="456.4" text-anchor="end">2 K</text><text class="ax" x="102.3" y="421.1" text-anchor="end">4 K</text><text class="ax" x="102.3" y="385.8" text-anchor="end">6 K</text><text class="ax" x="102.3" y="350.5" text-anchor="end">8 K</text><text class="ax" x="119.6" y="504" text-anchor="middle">03:00</text><text class="ax" x="206.55" y="504" text-anchor="middle">04:00</text><text class="ax" x="293.5" y="504" text-anchor="middle">05:00</text><text class="ax" x="380.45" y="504" text-anchor="middle">06:00</text><text class="ax" x="467.4" y="504" text-anchor="middle">07:00</text><text class="ax" x="554.35" y="504" text-anchor="middle">08:00</text><text class="ax" x="641.3" y="504" text-anchor="middle">09:00</text><text class="ax" x="728.25" y="504" text-anchor="middle">10:00</text><text class="ax" x="815.2" y="504" text-anchor="middle">11:00</text><text class="ax" x="902.15" y="504" text-anchor="middle">12:00</text><text class="ax" x="989.1" y="504" text-anchor="middle">13:00</text><text class="ax" x="1076.05" y="504" text-anchor="middle">14:00</text><text class="ttl" x="624.3" y="330.2" text-anchor="middle">request_length_bytes</text><path d="M114.62 487.08H124.52V488.47H128.88V486.49H140.37V488.47H201.75V483.12H213.63V488.47H417.4V487.28H431.65V488.47H998.78V483.51H1008.68V488.47V488.5 H114.62 Z" fill="#7EB26D" fill-opacity="0.1" stroke="none" clip-path="url(#c4)"/><path d="M114.62 487.08H124.52V488.47H128.88V486.49H140.37V488.47H201.75V483.12H213.63V488.47H417.4V487.28H431.65V488.47H998.78V483.51H1008.68V488.47" fill="none" stroke="#7EB26D" stroke-width="1" stroke-linejoin="round" clip-path="url(#c4)"/><path d="M107.1 488.47H113.24V435.99H127.5V488.47H131.46V433.42H146.31V488.47H159.57V456.78H174.43V488.47H200.17V438.96H215.02V488.47H253.24V427.08H257V427.08H267.89V488.47H292.64V436.58H307.1V488.47H338.58V422.72H353.04V488.47H379.18V432.43H393.63V488.47H417V442.52H423.34V430.45H431.26V475.99H437V475.99H438.58V488.47H444.52V474.6H459.18V488.47H476.6V431.44H490.86V488.47H513.24V440.54H527.69V488.47H557.4V427.48H572.05V488.47H609.28V427.48H617V427.48H623.93V488.47H639.18V438.96H653.63V488.47H665.51V447.48H680.37V488.47H721.55V426.68H736.21V488.47H746.11V448.47H760.96V488.47H787.3V433.42H797V433.42H801.95V488.47H830.27V430.64H843.93V413.22H844.92V471.24H858.39V488.47H871.85V431.63H886.7V488.47H912.25V435.99H927.3V488.47H964.33V423.51H977V423.51H978.58V488.47H994.43V447.28H1009.08V488.47H1033.44V420.15H1048.29V488.47H1061.55V402.92H1076.41V488.47H1091.26V438.96H1105.71V488.47H1132.45V431.44H1146.7V488.47H1150.27V488.47H1150.3V488.5 H107.1 Z" fill="#EF843C" fill-opacity="0.15" stroke="none" clip-path="url(#c4)"/><path d="M107.1 488.47H113.24V435.99H127.5V488.47H131.46V433.42H146.31V488.47H159.57V456.78H174.43V488.47H200.17V438.96H215.02V488.47H253.24V427.08H257V427.08H267.89V488.47H292.64V436.58H307.1V488.47H338.58V422.72H353.04V488.47H379.18V432.43H393.63V488.47H417V442.52H423.34V430.45H431.26V475.99H437V475.99H438.58V488.47H444.52V474.6H459.18V488.47H476.6V431.44H490.86V488.47H513.24V440.54H527.69V488.47H557.4V427.48H572.05V488.47H609.28V427.48H617V427.48H623.93V488.47H639.18V438.96H653.63V488.47H665.51V447.48H680.37V488.47H721.55V426.68H736.21V488.47H746.11V448.47H760.96V488.47H787.3V433.42H797V433.42H801.95V488.47H830.27V430.64H843.93V413.22H844.92V471.24H858.39V488.47H871.85V431.63H886.7V488.47H912.25V435.99H927.3V488.47H964.33V423.51H977V423.51H978.58V488.47H994.43V447.28H1009.08V488.47H1033.44V420.15H1048.29V488.47H1061.55V402.92H1076.41V488.47H1091.26V438.96H1105.71V488.47H1132.45V431.44H1146.7V488.47H1150.27V488.47H1150.3" fill="none" stroke="#EF843C" stroke-width="1.2" stroke-linejoin="round" clip-path="url(#c4)"/><path d="M107.1 468.66H109.67V455.4H114.23V475.59H124.52V488.47H126.11V481.53H128.09V474.6H133.44V471.63H136.8V455.4H140.76V469.65H143.93V460.15H147.3V463.32H151.85V479.55H158.19V488.47H166.11V483.51H169.67V472.03H179.97V466.09H184.92V477.18H195.22V488.47H197.4V472.03H202.15V455.4H211.65V472.03H215.61V460.15H217.59V477.18H223.53V466.09H228.49V454.8H229.87V466.09H233.44V460.15H238.39V472.03H240.37V458.76H242.35V469.65H248.29V475.59H251.26V461.73H253.24V473.61H257V473.61H258.58V463.71H263.93V443.91H265.91V458.76H269.28V447.87H271.85V453.81H274.43V447.87H277.79V465.69H280.37V452.82H283.73V458.76H287.69V469.65H294.62V483.51H297.59V477.57H303.53V474.6H309.48V457.18H311.46V468.66H318.39V471.63H324.92V488.47H327.3V468.07H335.81V462.72H341.16V482.52H352.05V487.48H357.99V481.93H363.93V483.91H367.89V481.93H372.84V487.08H380.17V453.81H389.67V437.97H394.03V471.63H396.6V458.76H403.14V437.97H404.52V454.8H411.06V468.07H413.44V457.18H416.41V477.57H427.3V464.7H428.88V474.6H431.26V458.76H435.22V453.81H437V453.22H441.36V466.09H446.9V472.03H460.37V488.47H467.1V479.55H471.06V474.01H480.17V446.88H482.15V454.8H485.51V459.75H494.43V488.47H503.34V477.57H510.66V460.74H515.22V469.65H518.19V460.74H524.52V477.57H528.49V464.7H533.04V475.2H542.94V488.47H546.31V477.18H561.36V488.47H570.66V476.58H577.99V466.09H585.12V477.18H591.06V464.7H593.44V475.59H605.32V466.09H606.9V479.55H614.23V469.65H617V469.65H619.38V477.18H624.52V466.68H629.87V477.18H638.78V488.47H653.63V477.57H668.49V488.47H674.43V477.18H678.78V459.16H688.29V470.64H692.64V488.47H730.27V475.59H744.72V488.47H749.28V477.57H763.53V488.47H765.51V483.51H778.39V488.47H791.26V475.99H797V475.99H805.91V488.47H809.87V479.55H824.33V488.47H830.27V477.57H844.52V488.47H859.38V477.97H866.31V460.74H874.62V471.63H875.81V460.74H878.58V441.93H880.17V458.76H889.08V470.05H893.44V488.47H896.01V472.62H902.94V458.76H910.86V475.59H917.4V488.47H956.41V485.89H970.27V488.47H977V488.47H984.92V483.51H998.78V488.47H1050.27V487.48H1064.13V488.47H1066.5V485.89H1079.97V488.47H1089.87V483.51H1103.73V488.47H1150.27V488.47H1150.3V488.5 H107.1 Z" fill="#BA43A9" fill-opacity="0.15" stroke="none" clip-path="url(#c4)"/><path d="M107.1 468.66H109.67V455.4H114.23V475.59H124.52V488.47H126.11V481.53H128.09V474.6H133.44V471.63H136.8V455.4H140.76V469.65H143.93V460.15H147.3V463.32H151.85V479.55H158.19V488.47H166.11V483.51H169.67V472.03H179.97V466.09H184.92V477.18H195.22V488.47H197.4V472.03H202.15V455.4H211.65V472.03H215.61V460.15H217.59V477.18H223.53V466.09H228.49V454.8H229.87V466.09H233.44V460.15H238.39V472.03H240.37V458.76H242.35V469.65H248.29V475.59H251.26V461.73H253.24V473.61H257V473.61H258.58V463.71H263.93V443.91H265.91V458.76H269.28V447.87H271.85V453.81H274.43V447.87H277.79V465.69H280.37V452.82H283.73V458.76H287.69V469.65H294.62V483.51H297.59V477.57H303.53V474.6H309.48V457.18H311.46V468.66H318.39V471.63H324.92V488.47H327.3V468.07H335.81V462.72H341.16V482.52H352.05V487.48H357.99V481.93H363.93V483.91H367.89V481.93H372.84V487.08H380.17V453.81H389.67V437.97H394.03V471.63H396.6V458.76H403.14V437.97H404.52V454.8H411.06V468.07H413.44V457.18H416.41V477.57H427.3V464.7H428.88V474.6H431.26V458.76H435.22V453.81H437V453.22H441.36V466.09H446.9V472.03H460.37V488.47H467.1V479.55H471.06V474.01H480.17V446.88H482.15V454.8H485.51V459.75H494.43V488.47H503.34V477.57H510.66V460.74H515.22V469.65H518.19V460.74H524.52V477.57H528.49V464.7H533.04V475.2H542.94V488.47H546.31V477.18H561.36V488.47H570.66V476.58H577.99V466.09H585.12V477.18H591.06V464.7H593.44V475.59H605.32V466.09H606.9V479.55H614.23V469.65H617V469.65H619.38V477.18H624.52V466.68H629.87V477.18H638.78V488.47H653.63V477.57H668.49V488.47H674.43V477.18H678.78V459.16H688.29V470.64H692.64V488.47H730.27V475.59H744.72V488.47H749.28V477.57H763.53V488.47H765.51V483.51H778.39V488.47H791.26V475.99H797V475.99H805.91V488.47H809.87V479.55H824.33V488.47H830.27V477.57H844.52V488.47H859.38V477.97H866.31V460.74H874.62V471.63H875.81V460.74H878.58V441.93H880.17V458.76H889.08V470.05H893.44V488.47H896.01V472.62H902.94V458.76H910.86V475.59H917.4V488.47H956.41V485.89H970.27V488.47H977V488.47H984.92V483.51H998.78V488.47H1050.27V487.48H1064.13V488.47H1066.5V485.89H1079.97V488.47H1089.87V483.51H1103.73V488.47H1150.27V488.47H1150.3" fill="none" stroke="#BA43A9" stroke-width="1" stroke-linejoin="round" clip-path="url(#c4)"/><path d="M450.86 484.5H464.72V488.47V488.5 H450.86 Z" fill="#CCA300" fill-opacity="0.1" stroke="none" clip-path="url(#c4)"/><path d="M450.86 484.5H464.72V488.47" fill="none" stroke="#CCA300" stroke-width="1" stroke-linejoin="round" clip-path="url(#c4)"/><path d="M107.1 488.47H109.67V486.49H124.52V488.47H127.5V482.52H140.37V487.48H145.32V487.08H158.19V488.47H167.1V483.51H170.07V473.61H179.97V472.62H184.92V483.12H195.22V488.47H197.79V486.49H203.73V483.91H211.65V487.48H217.59V488.47H228.49V483.91H233.44V478.96H240.37V476.58H242.94V481.53H248.29V486.49H254.23V488.47H257V483.51H258.58V477.57H272.45V487.48H280.37V480.54H283.73V478.56H288.29V480.54H293.63V487.48H303.53V483.51H310.47V480.94H312.45V483.12H318.78V486.49H324.92V488.47H335.81V481.93H348.49V471.24H349.67V477.57H357.59V419.16H362.94V430.05H366.9V424.7H371.85V482.52H381.36V488.47H413.44V484.5H426.9V479.55H428.88V483.51H435.22V479.55H437V479.55H441.36V488.47H445.91V483.51H450.86V488.47H467.1V475.4H476.6V473.61H480.17V374.6H482.15V359.75H486.5V350.45H494.43V457.77H496.41V480.54H500.76V488.47H502.35V481.53H510.66V475.99H515.22V479.55H518.58V481.93H524.52V485.5H533.04V487.08H542.94V488.47H546.31V481.53H561.36V488.47H570.66V483.51H577.99V481.53H585.12V486.49H591.46V483.12H594.43V485.5H605.32V488.47H617V488.47H619.38V485.5H629.87V488.47H653.63V481.93H668.49V488.47H674.43V485.1H688.29V488.47H696.21V481.93H703.14V474.21H711.06V480.54H717.99V488.47H730.27V480.54H744.72V488.47H749.28V485.1H763.53V488.47H765.12V479.55H778.39V488.47H781.36V479.55H791.26V481.53H795.22V486.49H797V486.49H805.91V488.47H809.87V484.5H824.33V488.47H830.27V485.89H837.59V483.12H840.96V477.57H844.52V481.14H848.49V483.12H855.42V488.47H859.38V486.49H866.31V483.51H874.62V481.14H878.58V477.97H880.56V481.14H889.08V485.5H893.44V488.47H896.01V487.08H902.94V485.1H911.85V487.08H917.4V488.47H956.41V474.6H970.27V488.47H977V488.47H984.92V468.66H999.38V488.47H1018.19V480.54H1032.84V488.47H1050.27V478.96H1064.13V488.47H1066.5V483.51H1079.97V488.47H1116.6V480.54H1123.53V470.64H1131.06V478.56H1135.42V466.68H1138.39V476.58H1149.67V481.53H1150.27V481.53H1150.3V488.5 H107.1 Z" fill="#447EBC" fill-opacity="0.15" stroke="none" clip-path="url(#c4)"/><path d="M107.1 488.47H109.67V486.49H124.52V488.47H127.5V482.52H140.37V487.48H145.32V487.08H158.19V488.47H167.1V483.51H170.07V473.61H179.97V472.62H184.92V483.12H195.22V488.47H197.79V486.49H203.73V483.91H211.65V487.48H217.59V488.47H228.49V483.91H233.44V478.96H240.37V476.58H242.94V481.53H248.29V486.49H254.23V488.47H257V483.51H258.58V477.57H272.45V487.48H280.37V480.54H283.73V478.56H288.29V480.54H293.63V487.48H303.53V483.51H310.47V480.94H312.45V483.12H318.78V486.49H324.92V488.47H335.81V481.93H348.49V471.24H349.67V477.57H357.59V419.16H362.94V430.05H366.9V424.7H371.85V482.52H381.36V488.47H413.44V484.5H426.9V479.55H428.88V483.51H435.22V479.55H437V479.55H441.36V488.47H445.91V483.51H450.86V488.47H467.1V475.4H476.6V473.61H480.17V374.6H482.15V359.75H486.5V350.45H494.43V457.77H496.41V480.54H500.76V488.47H502.35V481.53H510.66V475.99H515.22V479.55H518.58V481.93H524.52V485.5H533.04V487.08H542.94V488.47H546.31V481.53H561.36V488.47H570.66V483.51H577.99V481.53H585.12V486.49H591.46V483.12H594.43V485.5H605.32V488.47H617V488.47H619.38V485.5H629.87V488.47H653.63V481.93H668.49V488.47H674.43V485.1H688.29V488.47H696.21V481.93H703.14V474.21H711.06V480.54H717.99V488.47H730.27V480.54H744.72V488.47H749.28V485.1H763.53V488.47H765.12V479.55H778.39V488.47H781.36V479.55H791.26V481.53H795.22V486.49H797V486.49H805.91V488.47H809.87V484.5H824.33V488.47H830.27V485.89H837.59V483.12H840.96V477.57H844.52V481.14H848.49V483.12H855.42V488.47H859.38V486.49H866.31V483.51H874.62V481.14H878.58V477.97H880.56V481.14H889.08V485.5H893.44V488.47H896.01V487.08H902.94V485.1H911.85V487.08H917.4V488.47H956.41V474.6H970.27V488.47H977V488.47H984.92V468.66H999.38V488.47H1018.19V480.54H1032.84V488.47H1050.27V478.96H1064.13V488.47H1066.5V483.51H1079.97V488.47H1116.6V480.54H1123.53V470.64H1131.06V478.56H1135.42V466.68H1138.39V476.58H1149.67V481.53H1150.27V481.53H1150.3" fill="none" stroke="#447EBC" stroke-width="1" stroke-linejoin="round" clip-path="url(#c4)"/><path d="M167.1 485.89H180.96V488.47H431.26V475.99H438.58V488.47V488.5 H167.1 Z" fill="#C15C17" fill-opacity="0.1" stroke="none" clip-path="url(#c4)"/><path d="M167.1 485.89H180.96V488.47H431.26V475.99H438.58V488.47" fill="none" stroke="#C15C17" stroke-width="1" stroke-linejoin="round" clip-path="url(#c4)"/><path d="M437 487.08H449.87V488.5H486.5V485.89H501.36V488.5H519.18V486.49H532.05V488.5H570.66V486.49H584.52V488.5H605.32V486.49H617V486.49H618.98V488.5H956.41V481.93H970.27V488.5H1089.87V486.49H1103.73V488.5H1135.42V487.48H1150.27V487.48V488.5 H437 Z" fill="#a01a0c" fill-opacity="0.1" stroke="none" clip-path="url(#c4)"/><path d="M437 487.08H449.87V488.5H486.5V485.89H501.36V488.5H519.18V486.49H532.05V488.5H570.66V486.49H584.52V488.5H605.32V486.49H617V486.49H618.98V488.5H956.41V481.93H970.27V488.5H1089.87V486.49H1103.73V488.5H1135.42V487.48H1150.27V487.48" fill="none" stroke="#a01a0c" stroke-width="1" stroke-linejoin="round" clip-path="url(#c4)"/><line x1="107.1" x2="1150.3" y1="488.7" y2="488.7" stroke="#a3270f" stroke-width="1.15"/><rect x="95.75" y="522.5" width="11.2" height="3.2" rx="1" fill="#7EB26D"/><text class="lg" x="110.8" y="527.9">{instance="</text><rect x="95.75" y="540.5" width="11.2" height="3.2" rx="1" fill="#EF843C"/><text class="lg" x="110.8" y="545.9">{instance="</text><rect x="95.75" y="558.4" width="11.2" height="3.2" rx="1" fill="#BA43A9"/><text class="lg" x="110.8" y="563.8">{instance="</text><rect x="95.75" y="576.4" width="11.2" height="3.2" rx="1" fill="#CCA300"/><text class="lg" x="110.8" y="581.8">{instance="</text><rect x="95.75" y="594.3" width="11.2" height="3.2" rx="1" fill="#C15C17"/><text class="lg" x="110.8" y="599.7">{instance="</text><rect x="440.5" y="522.5" width="11.2" height="3.2" rx="1" fill="#EAB839"/><text class="lg" x="455.4" y="527.9">{instance=</text><text class="lg" x="443.9" y="545.7">}</text><rect x="457" y="540.5" width="11.2" height="3.2" rx="1" fill="#E24D42"/><text class="lg" x="472.4" y="545.9">{instan</text><rect x="450.9" y="558.4" width="11.2" height="3.2" rx="1" fill="#705DA0"/><text class="lg" x="466.3" y="563.8">{instanc</text><text class="lg" x="467.4" y="581.6" text-anchor="end">le.com"}</text><rect x="476.8" y="576.4" width="11.2" height="3.2" rx="1" fill="#447EBC"/><text class="lg" x="491.6" y="581.8">{instance="nginx</text><text class="lg" x="443.8" y="599.5">n</text><text class="lg" x="484.4" y="599.5">n"}</text><rect x="505.4" y="594.8" width="11" height="3.2" rx="1" fill="#890F02"/><rect x="520" y="595" width="1.2" height="2.2" fill="#77777a"/><text class="lg" x="1157.8" y="563.4" text-anchor="end">example.com"}</text><rect class="red" x="162.4" y="514.2" width="281.3" height="87.2"/><rect class="red" x="448.9" y="587" width="36" height="14.4"/><rect class="red" x="504.6" y="514.2" width="411.6" height="80.3"/><rect class="red" x="522.5" y="594" width="393.7" height="8"/><rect class="red" x="916" y="514.2" width="205.8" height="80.3"/><path d="M1170.6 602.7 h-4.6 v-1.5 h3.1 v-3.1 h1.5z" fill="#737377"/></svg></div>
<div class="panel" style="left:77px;top:616px;width:1096px;height:292px"><svg width="1096" height="292" viewBox="77 616 1096 292"><rect x="77" y="616.3" width="1096" height="291.2" fill="#212124"/><defs><clipPath id="c5"><rect x="123" y="640" width="1028" height="152"/></clipPath></defs><g class="grid"><line x1="123.3" x2="1150.3" y1="791" y2="791"/><line x1="123.3" x2="1150.3" y1="762.65" y2="762.65"/><line x1="123.3" x2="1150.3" y1="734.3" y2="734.3"/><line x1="123.3" x2="1150.3" y1="705.95" y2="705.95"/><line x1="123.3" x2="1150.3" y1="677.6" y2="677.6"/><line x1="123.3" x2="1150.3" y1="649.25" y2="649.25"/><line x1="135.75" x2="135.75" y1="649.25" y2="791"/><line x1="221.35" x2="221.35" y1="649.25" y2="791"/><line x1="306.95" x2="306.95" y1="649.25" y2="791"/><line x1="392.55" x2="392.55" y1="649.25" y2="791"/><line x1="478.15" x2="478.15" y1="649.25" y2="791"/><line x1="563.75" x2="563.75" y1="649.25" y2="791"/><line x1="649.35" x2="649.35" y1="649.25" y2="791"/><line x1="734.95" x2="734.95" y1="649.25" y2="791"/><line x1="820.55" x2="820.55" y1="649.25" y2="791"/><line x1="906.15" x2="906.15" y1="649.25" y2="791"/><line x1="991.75" x2="991.75" y1="649.25" y2="791"/><line x1="1077.35" x2="1077.35" y1="649.25" y2="791"/></g><text class="ax" x="117.8" y="794.2" text-anchor="end">0</text><text class="ax" x="117.8" y="765.85" text-anchor="end">500 K</text><text class="ax" x="117.8" y="737.5" text-anchor="end">1.0 Mil</text><text class="ax" x="117.8" y="709.15" text-anchor="end">1.5 Mil</text><text class="ax" x="117.8" y="680.8" text-anchor="end">2.0 Mil</text><text class="ax" x="117.8" y="652.45" text-anchor="end">2.5 Mil</text><text class="ax" x="135.75" y="806.4" text-anchor="middle">03:00</text><text class="ax" x="221.35" y="806.4" text-anchor="middle">04:00</text><text class="ax" x="306.95" y="806.4" text-anchor="middle">05:00</text><text class="ax" x="392.55" y="806.4" text-anchor="middle">06:00</text><text class="ax" x="478.15" y="806.4" text-anchor="middle">07:00</text><text class="ax" x="563.75" y="806.4" text-anchor="middle">08:00</text><text class="ax" x="649.35" y="806.4" text-anchor="middle">09:00</text><text class="ax" x="734.95" y="806.4" text-anchor="middle">10:00</text><text class="ax" x="820.55" y="806.4" text-anchor="middle">11:00</text><text class="ax" x="906.15" y="806.4" text-anchor="middle">12:00</text><text class="ax" x="991.75" y="806.4" text-anchor="middle">13:00</text><text class="ax" x="1077.35" y="806.4" text-anchor="middle">14:00</text><text class="ttl" x="624.3" y="632.9" text-anchor="middle">bytes_sent</text><path d="M123.25 791H185.75V789.25H195.75V788H199.5V789.25H209.5V791H217V790.25H225.75V791H247.75V752.25H262V791H293.25V790.25H300.75V791H317V782.75H331.5V791H360.5V789.25H370V781H376.25V783H378.75V781.75H385V791H477.5V788.5H490.5V775.5H492.5V777.5H504.5V791H513.75V784.25H528V791H555.5V789.75H570V791H579.5V790.25H592.5V791H661.08V788.83H675.58V791H709.42V789.8H723.91V791H769.83V790.28H784.33V791H814.3V788.35H828.8V791H883.25V787H897.5V790.5H907V664.5H913.75V665.75H921.25V791H959.5V685.75H973V791H987.5V789.5H1002V791H1020V790.25H1035V791H1051.25V790.25H1065.5V791H1117.5V789.5H1131.25V791H1150V791H1150.3V791 H123.25 Z" fill="#447EBC" fill-opacity="0.13" stroke="none" clip-path="url(#c5)"/><path d="M123.25 791H185.75V789.25H195.75V788H199.5V789.25H209.5V791H217V790.25H225.75V791H247.75V752.25H262V791H293.25V790.25H300.75V791H317V782.75H331.5V791H360.5V789.25H370V781H376.25V783H378.75V781.75H385V791H477.5V788.5H490.5V775.5H492.5V777.5H504.5V791H513.75V784.25H528V791H555.5V789.75H570V791H579.5V790.25H592.5V791H661.08V788.83H675.58V791H709.42V789.8H723.91V791H769.83V790.28H784.33V791H814.3V788.35H828.8V791H883.25V787H897.5V790.5H907V664.5H913.75V665.75H921.25V791H959.5V685.75H973V791H987.5V789.5H1002V791H1020V790.25H1035V791H1051.25V790.25H1065.5V791H1117.5V789.5H1131.25V791H1150V791H1150.3" fill="none" stroke="#447EBC" stroke-width="1" stroke-linejoin="round" clip-path="url(#c5)"/><g stroke="#BA43A9" stroke-width="1" opacity="0.8"><line x1="128" x2="133" y1="790.2" y2="790.2"/><line x1="152" x2="160" y1="790.2" y2="790.2"/><line x1="272" x2="290" y1="790.2" y2="790.2"/><line x1="392" x2="402" y1="790.2" y2="790.2"/><line x1="406" x2="412" y1="790.2" y2="790.2"/><line x1="419" x2="426" y1="790.2" y2="790.2"/></g><line x1="123.3" x2="1150.3" y1="791.2" y2="791.2" stroke="#a3270f" stroke-width="1.15"/><rect x="95.75" y="824.4" width="11.2" height="3.2" rx="1" fill="#7EB26D"/><text class="lg" x="110.8" y="829.8">{instance</text><rect x="95.75" y="842.4" width="11.2" height="3.2" rx="1" fill="#EF843C"/><text class="lg" x="110.8" y="847.8">{instance</text><rect x="95.75" y="860.4" width="11.2" height="3.2" rx="1" fill="#BA43A9"/><text class="lg" x="110.8" y="865.8">{instance</text><rect x="95.75" y="878.4" width="11.2" height="3.2" rx="1" fill="#CCA300"/><text class="lg" x="110.8" y="883.8">{instance</text><rect x="95.75" y="896.4" width="11.2" height="3.2" rx="1" fill="#C15C17"/><text class="lg" x="110.8" y="901.8">{instance</text><text class="lg" x="163" y="901.35" opacity="0.55">"nginx-prod-01.example.prod:9913",job="nginx",host="www.example.com"}</text><text class="lg" x="520" y="901.35" opacity="0.55">{instance="nginx-prod-02.example.prod:9913",job="nginx",host="www.example.com"}</text><text class="lg" x="1157.8" y="866" text-anchor="end">.com"}</text><rect class="red" x="153.8" y="815.3" width="990.6" height="85.1"/><path d="M1170.6 905.1 h-4.6 v-1.5 h3.1 v-3.1 h1.5z" fill="#737377"/></svg></div>

<div id="scroll" style="position:absolute;left:1192px;top:482px;width:8px;height:427px;background:#0d0d0e;z-index:6"><div style="position:absolute;left:2px;top:1px;width:5.2px;height:426px;background:#47474c"></div></div>
</body>
</html>
